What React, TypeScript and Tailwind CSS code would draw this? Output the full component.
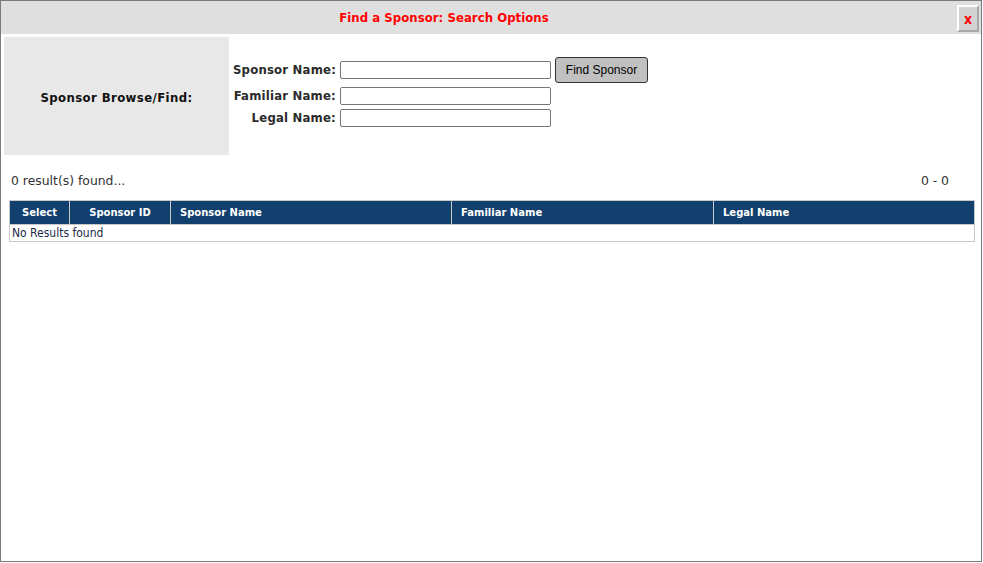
import React from "react";

const tahoma = { fontFamily: '"DejaVu Sans Condensed", "DejaVu Sans", sans-serif' };

export default function App() {
  return (
    <div className="w-[983px] h-[563px] bg-white" style={tahoma}>
      <div className="w-[982px] h-[562px] border border-[#7a7a7a] flex flex-col">
        {/* title bar */}
        <div className="h-[33px] bg-[#dfdfdf] flex items-center relative">
          <div className="w-[886px] text-center text-[13px] font-bold text-[#ff0000] tracking-[0.05px]">
            Find a Sponsor: Search Options
          </div>
          <div className="absolute right-[2px] top-[4px] w-[22px] h-[27px] bg-[#d2d2d2] border-2 border-t-white border-l-white border-r-[#a8a8a8] border-b-[#a8a8a8] flex items-center justify-center text-[#ff0000] text-[14px] font-bold leading-none">
            x
          </div>
        </div>
        {/* search area */}
        <div className="flex pt-[3px] pl-[3px]">
          <div className="w-[225px] h-[118px] bg-[#e8e8e8] flex items-center justify-center pt-[3px] text-[13px] font-bold text-[#111] tracking-[0.4px]">
            Sponsor Browse/Find:
          </div>
          <div className="pl-[4px] pt-[20px] flex flex-col text-[13px] font-bold text-[#2b2b2b] tracking-[0.2px]">
            <div className="flex items-center h-[26px]">
              <div className="w-[103px] text-right whitespace-nowrap">Sponsor Name:</div>
              <input className="ml-[4px] w-[211px] h-[18px] border border-[#767676] rounded-[2px] bg-white" />
              <button className="ml-[4px] w-[93px] h-[26px] bg-[#c0c0c0] border border-[#333] rounded-[3px] text-[12px] font-normal text-black tracking-normal" style={{ fontFamily: '"Liberation Sans", Arial, sans-serif' }}>
                Find Sponsor
              </button>
            </div>
            <div className="flex items-center h-[18px] mt-[4px]">
              <div className="w-[103px] text-right whitespace-nowrap">Familiar Name:</div>
              <input className="ml-[4px] w-[211px] h-[18px] border border-[#767676] rounded-[2px] bg-white" />
            </div>
            <div className="flex items-center h-[18px] mt-[4px]">
              <div className="w-[103px] text-right whitespace-nowrap">Legal Name:</div>
              <input className="ml-[4px] w-[211px] h-[18px] border border-[#767676] rounded-[2px] bg-white" />
            </div>
          </div>
        </div>
        {/* results */}
        <div className="flex justify-between items-center mt-[18px] pl-[10px] pr-[32px] text-[12.4px] text-[#333] h-[16px]" style={{ fontFamily: '"DejaVu Sans", Verdana, sans-serif' }}>
          <span>0 result(s) found...</span>
          <span>0 - 0</span>
        </div>
        <div className="mx-[8px] mt-[11px] w-[966px] border border-[#c8c8c8]">
          <div className="flex h-[23px] bg-[#113f6e] text-white text-[10px] font-bold items-center" style={{ fontFamily: '"DejaVu Sans", Verdana, sans-serif' }}>
            <div className="w-[60px] h-full flex items-center justify-center border-r border-[#c8c8c8]">Select</div>
            <div className="w-[101px] h-full flex items-center justify-center border-r border-[#c8c8c8]">Sponsor ID</div>
            <div className="w-[281px] h-full flex items-center pl-[9px] border-r border-[#c8c8c8]">Sponsor Name</div>
            <div className="w-[262px] h-full flex items-center pl-[9px] border-r border-[#c8c8c8]">Familiar Name</div>
            <div className="flex-1 h-full flex items-center pl-[9px]">Legal Name</div>
          </div>
          <div className="h-[17px] flex items-center pl-[2px] text-[12px] text-[#1a2a4a] border-t border-[#c8c8c8]">
            No Results found
          </div>
        </div>
      </div>
    </div>
  );
}
